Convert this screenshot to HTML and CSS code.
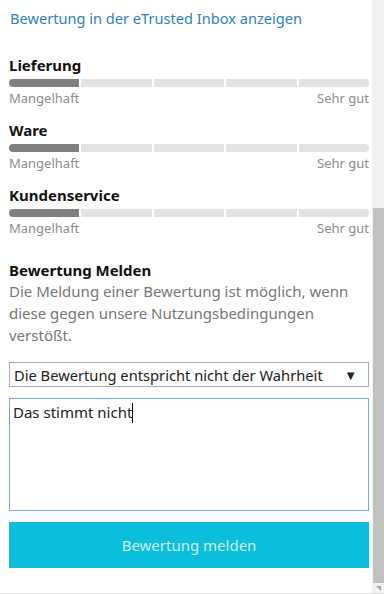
FILE: index.html
```html
<!doctype html>
<html lang="de">
  <head>
    <meta charset="UTF-8" />
    <meta name="viewport" content="width=device-width, initial-scale=1.0" />
    <title>Bewertung melden</title>
    <link rel="stylesheet" href="styles.css">
  </head>
  <body>
    <div class="frame">
      <div class="panel">
        <a class="inbox-link" href="#">Bewertung in der eTrusted Inbox anzeigen</a>

        <div class="rating">
          <div class="rating-title">Lieferung</div>
          <div class="bar">
            <span class="seg filled"></span>
            <span class="seg"></span>
            <span class="seg"></span>
            <span class="seg"></span>
            <span class="seg"></span>
          </div>
          <div class="scale"><span>Mangelhaft</span><span>Sehr gut</span></div>
        </div>

        <div class="rating">
          <div class="rating-title">Ware</div>
          <div class="bar">
            <span class="seg filled"></span>
            <span class="seg"></span>
            <span class="seg"></span>
            <span class="seg"></span>
            <span class="seg"></span>
          </div>
          <div class="scale"><span>Mangelhaft</span><span>Sehr gut</span></div>
        </div>

        <div class="rating">
          <div class="rating-title">Kundenservice</div>
          <div class="bar">
            <span class="seg filled"></span>
            <span class="seg"></span>
            <span class="seg"></span>
            <span class="seg"></span>
            <span class="seg"></span>
          </div>
          <div class="scale"><span>Mangelhaft</span><span>Sehr gut</span></div>
        </div>

        <div class="report">
          <h3>Bewertung Melden</h3>
          <p>Die Meldung einer Bewertung ist möglich, wenn diese gegen unsere Nutzungsbedingungen verstößt.</p>

          <div class="select">
            <span>Die Bewertung entspricht nicht der Wahrheit</span>
            <span class="arrow">▼</span>
          </div>

          <div class="textarea">Das stimmt nicht<span class="caret"></span></div>

          <button class="submit">Bewertung melden</button>
        </div>
      </div>

      <div class="scrollbar">
        <div class="thumb"></div>
        <div class="grip"></div>
      </div>
    </div>
  </body>
</html>
```

FILE: styles.css
```css
body {
  margin: 0;
  font-family: "Noto Sans", "Open Sans", sans-serif;
  background: white;
  color: #222;
}
.frame {
  display: flex;
  height: 593px;
  border-bottom: 1px solid #dcdcdc;
  overflow: hidden;
}
.panel {
  flex: 1;
  padding: 8px 3px 0 9px;
}
.inbox-link {
  display: block;
  color: #2e7fc3;
  text-decoration: none;
  font-size: 14.6px;
  line-height: 20px;
  padding-left: 1px;
  margin-bottom: 27px;
}
.rating {
  margin-bottom: 13px;
}
.rating-title {
  font-weight: bold;
  font-size: 15px;
  line-height: 20px;
  color: #111;
}
.bar {
  display: flex;
  gap: 2px;
  height: 8px;
  margin-top: 4px;
  border-radius: 4px;
  overflow: hidden;
}
.seg {
  flex: 1;
  background: #e3e3e3;
}
.seg.filled {
  background: #808080;
}
.scale {
  display: flex;
  justify-content: space-between;
  font-size: 13px;
  line-height: 18px;
  color: #8c8c8c;
  margin-top: 2px;
}
.report {
  padding-top: 13px;
}
.report h3 {
  margin: 0;
  font-size: 15px;
  line-height: 14px;
  color: #111;
}
.report p {
  margin: 3px 0 16px;
  font-size: 15px;
  line-height: 22px;
  color: #777;
}
.select {
  display: flex;
  justify-content: space-between;
  align-items: center;
  height: 23px;
  border: 1px solid #aaa;
  padding: 0 11px 0 4px;
  font-size: 14.7px;
  color: #222;
}
.arrow {
  font-size: 13px;
}
.textarea {
  height: 107px;
  margin-top: 11px;
  border: 1px solid #7ba3e8;
  padding: 2px 3px;
  font-size: 15px;
  line-height: 22px;
  color: #222;
}
.caret {
  display: inline-block;
  width: 1px;
  height: 20px;
  background: #111;
  vertical-align: -5px;
}
.submit {
  display: block;
  width: 100%;
  height: 46px;
  margin-top: 11px;
  border: none;
  background: #0bbedb;
  color: #cdeef4;
  font-family: inherit;
  font-size: 15px;
}
.scrollbar {
  width: 12px;
  background: #f1f1f1;
  display: flex;
  flex-direction: column;
}
.thumb {
  margin-top: 208px;
  height: 375px;
  margin-left: 1px;
  background: #c1c1c1;
}
.grip {
  margin-top: auto;
  margin-left: 4px;
  width: 0;
  height: 0;
  border-left: 5px solid transparent;
  border-top: 5px solid #a3a3a3;
  margin-bottom: 2px;
}
```
